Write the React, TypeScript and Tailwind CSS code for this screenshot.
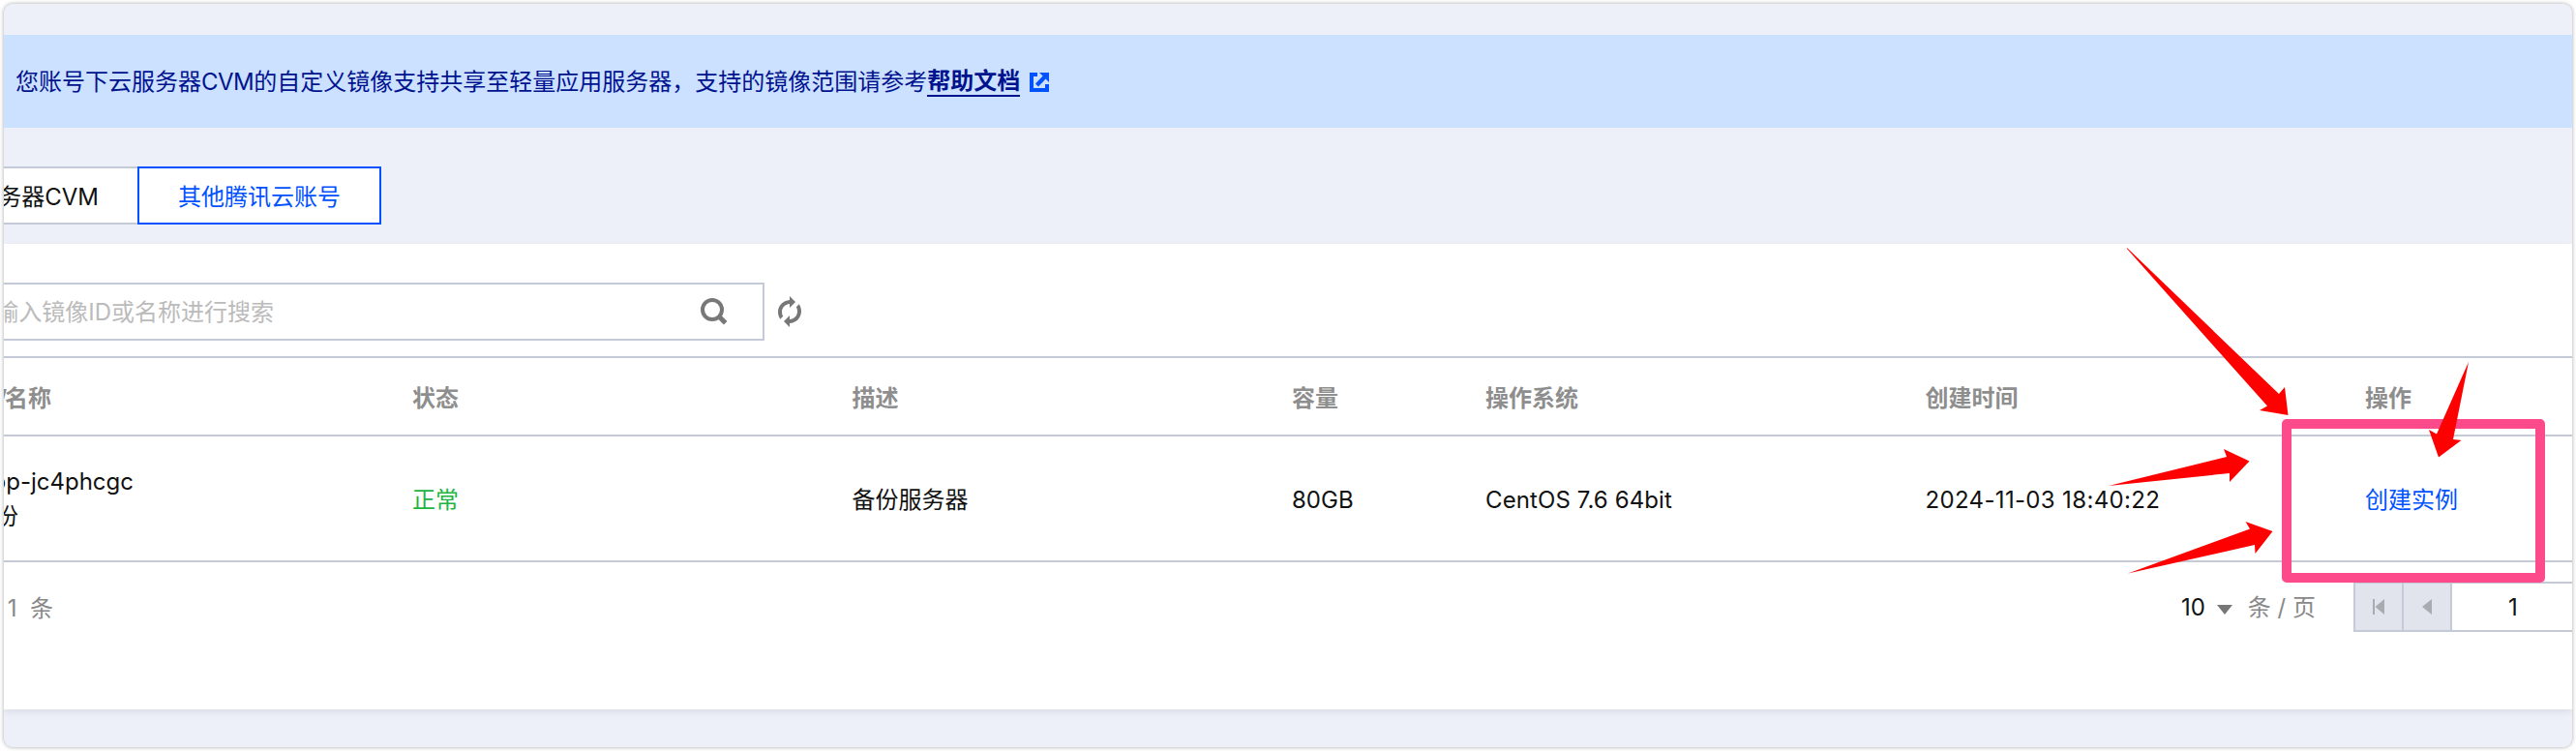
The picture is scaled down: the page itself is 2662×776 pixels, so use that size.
import type { ReactNode } from "react";

const COLUMNS = ["状态", "描述", "容量", "操作系统", "创建时间", "操作"];

const GRID =
  "grid grid-cols-[422px_454.5px_454.5px_200px_454.500px_454.5px_214px] items-center";

const ExternalIcon = () => (
  <svg viewBox="0 0 20 20" className="-mt-px ml-[10px] h-5 w-5 fill-[#0052ff]">
    <path d="M0 0h8v4H4v12h12v-4h4v8H0z" />
    <path d="M10 0h10v10l-3.400-3.400-7.600 7.800-3-3 7.600-7.800z" />
  </svg>
);

const SearchIcon = () => (
  <svg viewBox="0 0 28 28" className="h-7 w-7" fill="none" stroke="#777">
    <circle cx="12" cy="12" r="10" strokeWidth="4" />
    <path d="M18.500 18.500l7.200 7.200" strokeWidth="5" />
  </svg>
);

const RefreshIcon = () => (
  <svg viewBox="0 0 24 32" className="h-8 w-6" fill="#777">
    <path d="M12 0l6 6-6 6V8c-5 .5-8 4-8 8.300 0 1.700.5 3.200 1.200 4.500L2.300 23.700C.8 21.500 0 19 0 16.300 0 9.800 5 4.500 12 4z" />
    <path d="M12 32l-6-6 6-6v4c5-.5 8-4 8-8.300 0-1.700-.5-3.200-1.200-4.500l2.900-2.900C23.200 10.500 24 13 24 15.700 24 22.200 19 27.500 12 28z" />
  </svg>
);

const PageButton = ({ children }: { children: ReactNode }) => (
  <div className="flex h-[52px] w-[50px] items-center justify-center border-y-2 border-r-2 border-[#c5cad9] bg-[#e1e4ec]">
    {children}
  </div>
);

const Banner = () => (
  <div className="mt-8 flex h-24 items-center bg-[#cce0ff] pt-[2px] pl-3 text-[#00138f]">
    <span>
      您账号下云服务器<span className="tracking-[-0.5px]">CVM</span>
      的自定义镜像支持共享至轻量应用服务器，支持的镜像范围请参考
    </span>
    <a className="border-b-2 border-[#00138f] font-bold leading-[28px]">
      帮助文档
    </a>
    <ExternalIcon />
  </div>
);

const Tabs = () => (
  <div className="mt-10 flex h-[60px]">
    <div className="flex w-[138px] items-center justify-end overflow-hidden border-y-2 border-[#c5cad9] bg-white pt-[3px] pr-10 whitespace-nowrap">
      务器CVM
    </div>
    <div className="flex w-[252px] items-center justify-center border-2 border-[#0052ff] bg-white pt-[3px] text-[#0052ff]">
      其他腾讯云账号
    </div>
  </div>
);

const SearchBar = () => (
  <div className="flex items-center pt-10">
    <div className="flex h-[60px] w-[786px] items-center justify-between border-2 border-l-0 border-[#c5cad9] pr-9">
      <div className="flex w-[279px] justify-end overflow-hidden pt-[2px] whitespace-nowrap text-[#bbb]">
        输入镜像ID或名称进行搜索
      </div>
      <SearchIcon />
    </div>
    <div className="ml-[14px]">
      <RefreshIcon />
    </div>
  </div>
);

const ImageTable = () => (
  <div className="mt-4 border-y-2 border-[#c5cad9]">
    <div
      className={`${GRID} h-[81px] border-b-2 border-[#c5cad9] pt-1 font-bold text-[#8e8e8e]`}
    >
      <div className="flex w-[49px] justify-end overflow-hidden whitespace-nowrap">
        <span className="-mr-[2px]">/</span>名称
      </div>
      {COLUMNS.map((name) => (
        <div key={name}>{name}</div>
      ))}
    </div>
    <div className={`${GRID} h-32 pt-[3px]`}>
      <div className="leading-9">
        <div className="-mt-px flex w-[134px] justify-end overflow-hidden whitespace-nowrap">
          bp-jc4phcgc
        </div>
        <div className="flex w-[15px] justify-end overflow-hidden whitespace-nowrap">
          份
        </div>
      </div>
      <div className="text-[#1db440]">正常</div>
      <div>备份服务器</div>
      <div>80GB</div>
      <div className="tracking-[0.1px]">CentOS 7.6 64bit</div>
      <div className="tracking-[0.34px]">2024-11-03 18:40:22</div>
      <div className="text-[#0052ff]">创建实例</div>
    </div>
  </div>
);

const Pagination = () => (
  <div className="mt-5 flex h-[52px] items-center text-[#888]">
    <div className="flex w-[51px] justify-end overflow-hidden pt-1 whitespace-pre">
      1  条
    </div>
    <div className="ml-auto flex items-center">
      <span className="pt-[2px] text-[#111]">10</span>
      <svg viewBox="0 0 16 10" className="mt-[6px] mr-4 ml-3 h-[10px] w-4">
        <path d="M0 0h16l-8 10z" fill="#777" />
      </svg>
      <span className="mr-[39px] pt-[2px]">条 / 页</span>
      <div className="flex border-l-2 border-[#c5cad9]">
        <PageButton>
          <svg viewBox="0 0 12 16" className="h-4 w-3" fill="#a8acb0">
            <path d="M0 0h2v16H0zM12 0v16L2.500 8z" />
          </svg>
        </PageButton>
        <PageButton>
          <svg viewBox="0 0 10 16" className="h-4 w-[10px]" fill="#a8acb0">
            <path d="M10 0v16L0 8z" />
          </svg>
        </PageButton>
        <div className="flex h-[52px] w-[124px] items-center justify-center border-y-2 border-[#c5cad9] pt-[2px] pl-[2px] text-[#111]">
          1
        </div>
      </div>
    </div>
  </div>
);

// hand-drawn highlights that sit on top of the page
const Annotations = () => (
  <>
    <div className="absolute top-[433px] left-[2358px] h-[169px] w-[272px] rounded-[5px] border-[10px] border-[#fd4a8a]" />
    <svg
      viewBox="2170 250 400 350"
      className="absolute top-[250px] left-[2170px] h-[350px] w-[400px]"
      fill="#ff0000"
    >
      <path d="M2197.500 256.500L2198.500 256.500L2355 407L2361 400L2364.500 429L2335 424L2343 419.500z" />
      <path d="M2179 502L2301 472L2298 464L2324.500 476.500L2304 498L2304 489z" />
      <path d="M2199 592.500L2325 546.500L2320.500 539L2348.500 549L2330.500 572L2330 563z" />
      <path d="M2551 374L2535 454L2543.500 455L2520 472.500L2510 444L2518 448.500z" />
    </svg>
  </>
);

const App = () => {
  return (
    <div className="relative h-[776px] w-[2662px] overflow-hidden bg-white p-1 font-['Inter','Noto_Sans_CJK_SC',sans-serif] text-[24px] leading-9 text-[#111]">
      <div className="h-[768px] w-[2654px] overflow-hidden rounded-[9px] bg-[#edf0f9] shadow-[0_0_4px_rgba(0,0,0,0.35)]">
        <Banner />
        <Tabs />
        <div className="mt-5 h-[481px] bg-white shadow-[0_3px_7px_rgba(0,0,0,0.08)]">
          <SearchBar />
          <ImageTable />
          <Pagination />
        </div>
      </div>
      <Annotations />
    </div>
  );
};

export default App;
